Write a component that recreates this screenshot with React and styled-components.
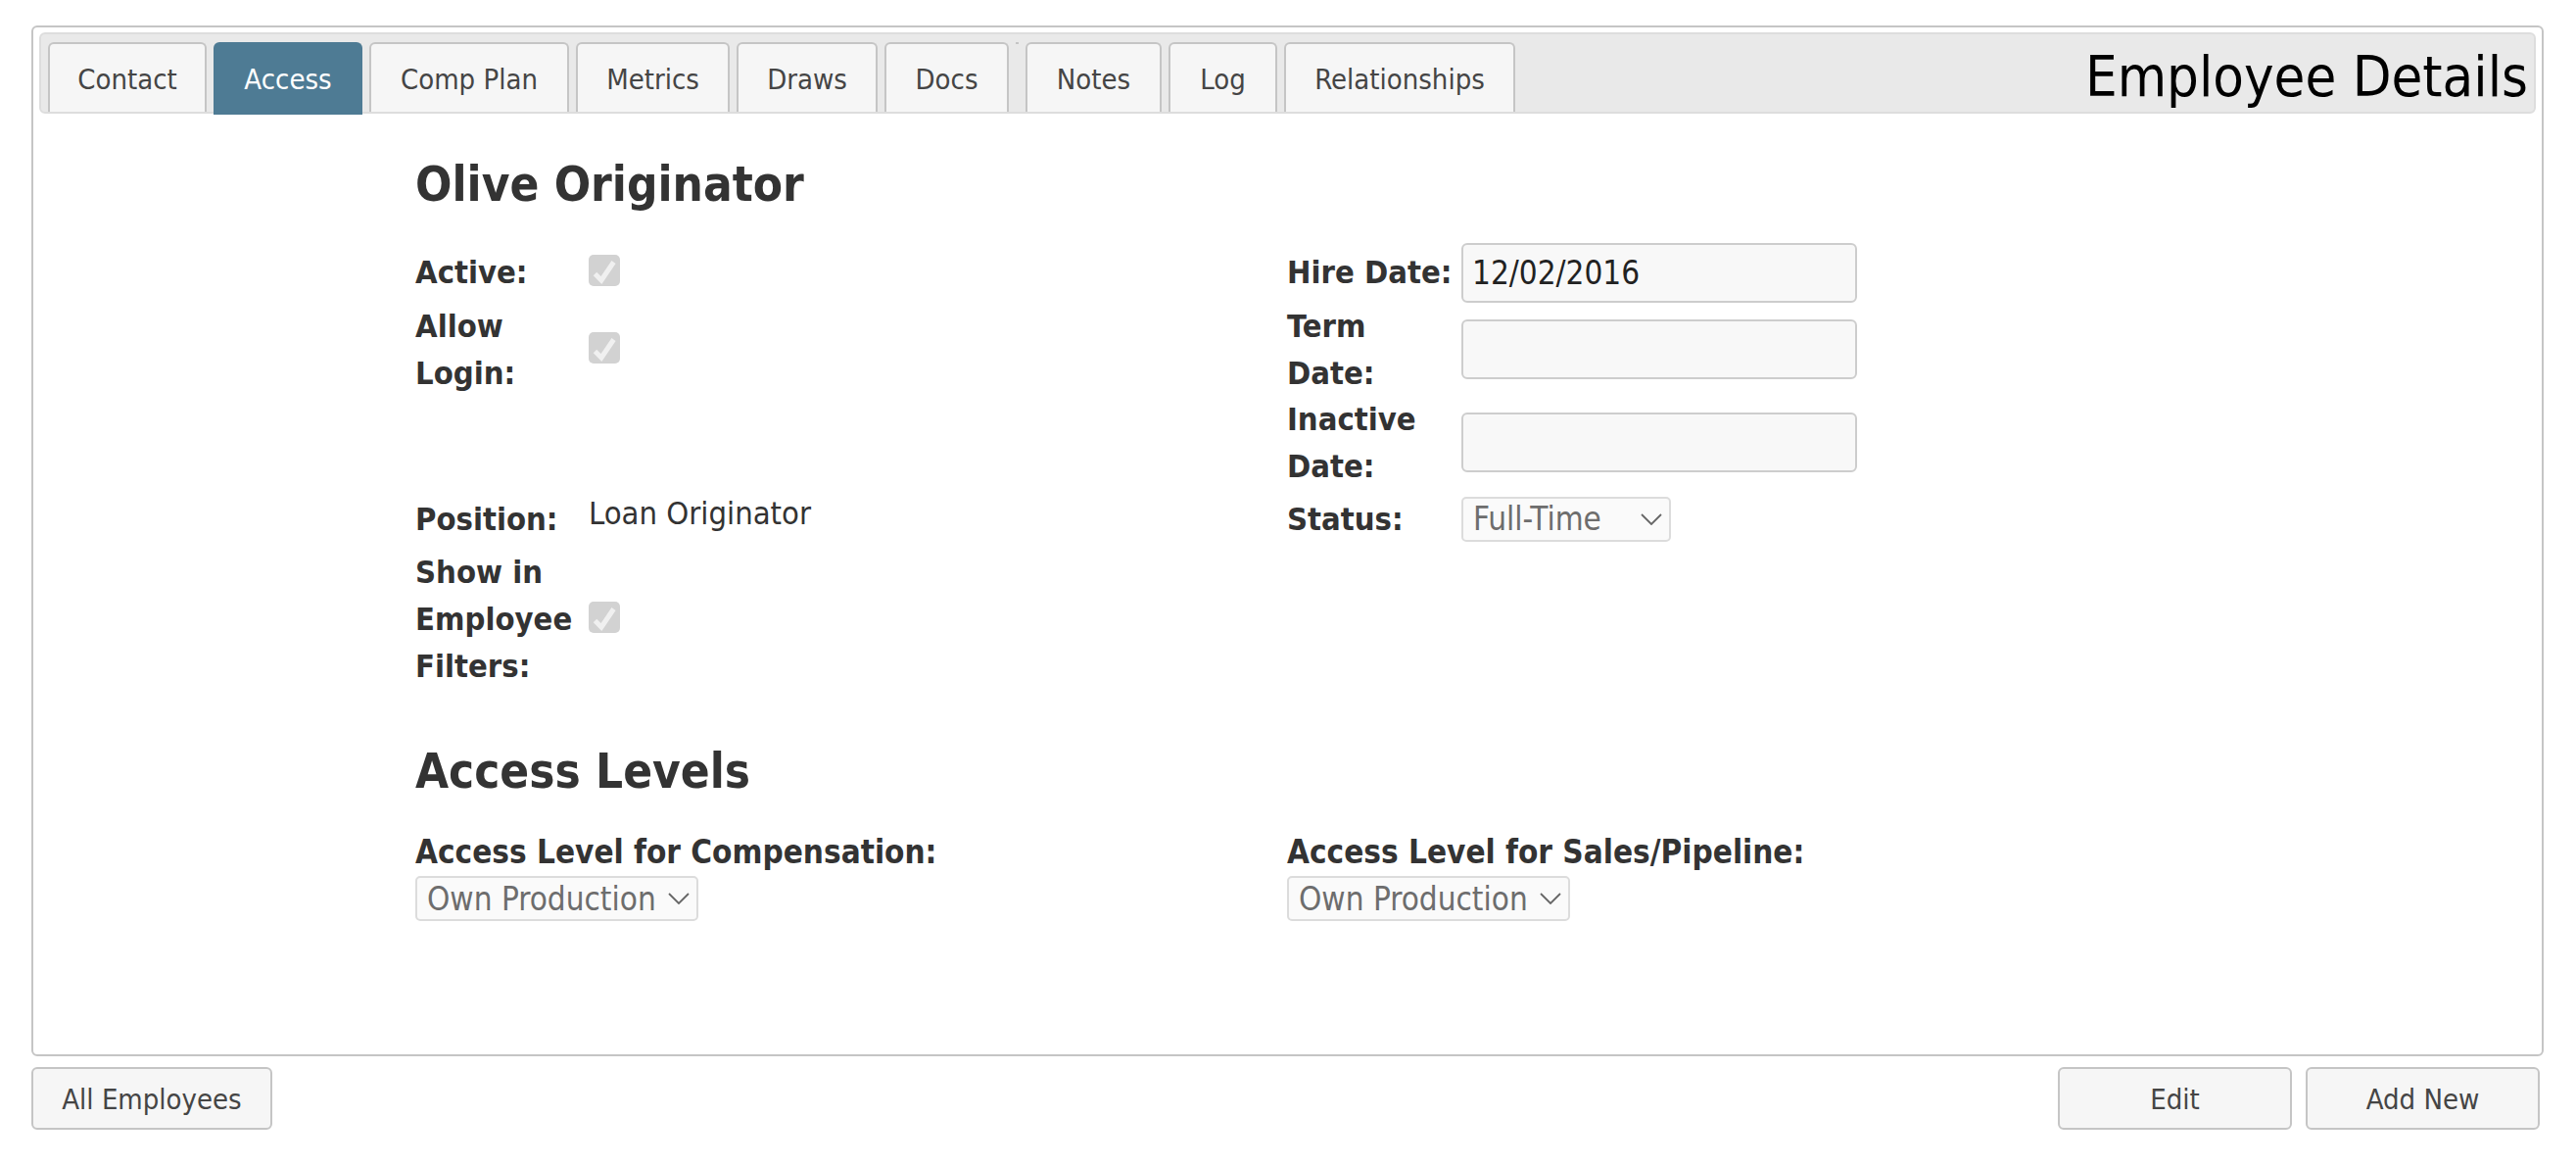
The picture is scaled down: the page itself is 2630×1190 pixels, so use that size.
import React from 'react';
import styled, { createGlobalStyle } from 'styled-components';

const GlobalStyle = createGlobalStyle`
    html, body {
        margin: 0;
        padding: 0;
        background: #fff;
    }
    body {
        font-family: "DejaVu Sans Condensed", "DejaVu Sans", Tahoma, sans-serif;
        font-size: 32.5px;
        color: #333;
    }
`

const Page = styled.div`
    width: 2630px;
    height: 1190px;
    box-sizing: border-box;
    padding: 26px 33px 0 32px;
`

const Panel = styled.div`
    height: 1052px;
    box-sizing: border-box;
    border: 2px solid #c5c5c5;
    border-radius: 6px;
    padding: 5px 6px 0;
`

const TabBar = styled.div`
    height: 83px;
    box-sizing: border-box;
    display: flex;
    justify-content: space-between;
    padding: 8px 6px 0 7px;
    background: #e9e9e9;
    border: 2px solid #ddd;
    border-radius: 6px;
`

const Tabs = styled.div`
    display: flex;
    gap: 7px;
`

const Tab = styled.div`
    height: ${p => (p.$active ? '74px' : '71px')};
    box-sizing: border-box;
    width: ${p => p.$width}px;
    display: flex;
    align-items: center;
    justify-content: center;
    padding-top: ${p => (p.$active ? '0' : '2px')};
    padding-bottom: ${p => (p.$active ? '1px' : '0')};
    border: 2px solid ${p => (p.$active ? '#4e7b94' : '#c5c5c5')};
    border-bottom: 0;
    border-radius: 6px 6px 0 0;
    background: ${p => (p.$active ? '#4e7b94' : '#f6f6f6')};
    color: ${p => (p.$active ? '#fff' : '#454545')};
    font-size: 29px;
`

const HiddenTab = styled.div`
    width: 3px;
    height: 2px;
    background: #c5c5c5;
`

const Title = styled.div`
    font-size: 57.5px;
    line-height: 72px;
    color: #000;
`

const Content = styled.div`
    padding: 41px 0 0 384px;
`

const Heading = styled.h2`
    margin: 0;
    font-size: 49px;
    line-height: 64px;
    font-weight: 700;
    color: #333;
`

const FormGrid = styled.div`
    display: grid;
    grid-template-columns: 177px 713px 178px 404px;
    grid-template-rows: 62px 95px 95px 61px 144px;
    margin-top: 26px;
    align-items: center;
`

const Label = styled.div`
    font-weight: 700;
    line-height: 48px;
    color: #333;
    white-space: nowrap;
    position: relative;
    top: ${p => p.$shift || 0}px;
`

const Value = styled.div`
    line-height: 48px;
    color: #333;
    position: relative;
    top: ${p => p.$shift || 0}px;
`

const Check = styled.span`
    display: block;
    width: 32px;
    height: 32px;
    margin-bottom: 4px;
    border-radius: 5px;
    background: #d2d2d2;
`

const DateInput = styled.input`
    width: 100%;
    height: 61px;
    box-sizing: border-box;
    padding: 0 9px;
    border: 2px solid #cdcdcd;
    border-radius: 6px;
    background: #f8f8f8;
    font-family: inherit;
    font-size: 33px;
    color: #222;
    outline: 0;
`

const SelectWrap = styled.div`
    position: relative;
    display: inline-block;
    width: ${p => p.$width}px;
`

const Select = styled.select`
    appearance: none;
    display: block;
    width: 100%;
    height: 46px;
    box-sizing: border-box;
    padding: 0 0 0 10px;
    border: 2px solid #dcdcdc;
    border-radius: 5px;
    background: #fafafa;
    font-family: inherit;
    font-size: 33px;
    color: #6d6d6d;
    opacity: 1;
`

const Chevron = styled.svg`
    position: absolute;
    right: 9px;
    top: 17px;
    width: 22px;
    height: 12px;
    pointer-events: none;
`

const LevelsHeading = styled(Heading)`
    margin-top: 52px;
`

const Levels = styled.div`
    display: grid;
    grid-template-columns: 890px 1fr;
    margin-top: 31px;
`

const LevelLabel = styled.div`
    font-size: 33px;
    font-weight: 700;
    line-height: 38px;
    margin-bottom: 5px;
    color: #333;
`

const Footer = styled.div`
    display: flex;
    justify-content: space-between;
    margin-top: 11px;
    padding-right: 4px;
`

const ButtonRow = styled.div`
    display: flex;
    gap: 14px;
`

const Button = styled.button`
    width: ${p => p.$width}px;
    height: 64px;
    box-sizing: border-box;
    padding: 2px 0 0;
    border: 2px solid #c5c5c5;
    border-radius: 6px;
    background: #f6f6f6;
    font-family: inherit;
    font-size: 29px;
    color: #454545;
`

const tabs = [
    { name: 'Contact', width: 162 },
    { name: 'Access', width: 152, active: true },
    { name: 'Comp Plan', width: 204 },
    { name: 'Metrics', width: 157 },
    { name: 'Draws', width: 144 },
    { name: 'Docs', width: 127 },
    { divider: true },
    { name: 'Notes', width: 139 },
    { name: 'Log', width: 111 },
    { name: 'Relationships', width: 236 },
]

const CheckMark = () => (
    <Check>
        <svg width="32" height="32" viewBox="0 0 32 32">
            <path d="M6.5 19.5l6.5 6.5L25.5 7.5" fill="none" stroke="#f0f0f0" strokeWidth="5" />
        </svg>
    </Check>
)

const Dropdown = ({ value, width }) => (
    <SelectWrap $width={width}>
        <Select disabled defaultValue={value}>
            <option>{value}</option>
        </Select>
        <Chevron viewBox="0 0 22 12">
            <path d="M1 1l10 10L21 1" fill="none" stroke="#666" strokeWidth="1.8" />
        </Chevron>
    </SelectWrap>
)

export default function App() {
    return (
        <Page>
            <GlobalStyle />
            <Panel>
                <TabBar>
                    <Tabs>
                        {tabs.map((t, i) => (
                            t.divider
                                ? <HiddenTab key={i} />
                                : <Tab key={t.name} $active={t.active} $width={t.width}>{t.name}</Tab>
                        ))}
                    </Tabs>
                    <Title>Employee Details</Title>
                </TabBar>
                <Content>
                    <Heading>Olive Originator</Heading>
                    <FormGrid>
                        <Label>Active:</Label>
                        <CheckMark />
                        <Label>Hire Date:</Label>
                        <DateInput readOnly value="12/02/2016" />

                        <Label>Allow<br />Login:</Label>
                        <CheckMark />
                        <Label>Term<br />Date:</Label>
                        <DateInput readOnly value="" />

                        <div />
                        <div />
                        <Label>Inactive<br />Date:</Label>
                        <DateInput readOnly value="" />

                        <Label>Position:</Label>
                        <Value $shift={-6}>Loan Originator</Value>
                        <Label>Status:</Label>
                        <div><Dropdown value="Full-Time" width={214} /></div>

                        <Label>Show in<br />Employee<br />Filters:</Label>
                        <CheckMark />
                        <div />
                        <div />
                    </FormGrid>
                    <LevelsHeading>Access Levels</LevelsHeading>
                    <Levels>
                        <div>
                            <LevelLabel>Access Level for Compensation:</LevelLabel>
                            <Dropdown value="Own Production" width={289} />
                        </div>
                        <div>
                            <LevelLabel>Access Level for Sales/Pipeline:</LevelLabel>
                            <Dropdown value="Own Production" width={289} />
                        </div>
                    </Levels>
                </Content>
            </Panel>
            <Footer>
                <Button $width={246}>All Employees</Button>
                <ButtonRow>
                    <Button $width={239}>Edit</Button>
                    <Button $width={239}>Add New</Button>
                </ButtonRow>
            </Footer>
        </Page>
    )
}
